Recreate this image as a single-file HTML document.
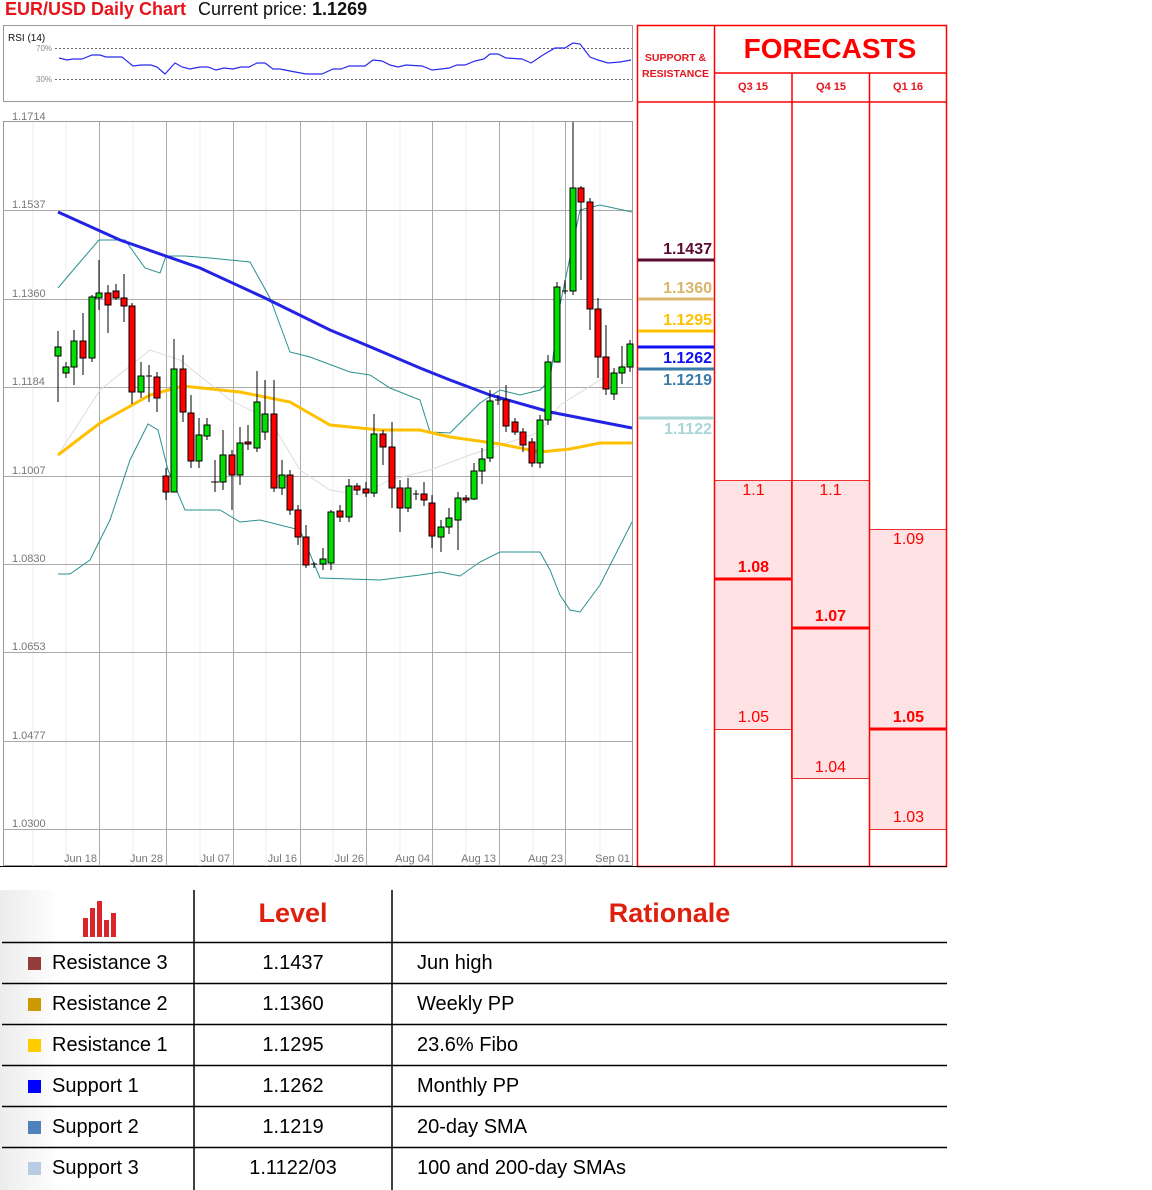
<!DOCTYPE html>
<html><head><meta charset="utf-8"><style>
body{margin:0;width:1152px;height:1190px;background:#fff;position:relative;overflow:hidden;font-family:"Liberation Sans",sans-serif}
.a{position:absolute;white-space:nowrap}
.sr{position:absolute;right:440px;font-size:16px;font-weight:bold;line-height:18px}
.fc{position:absolute;width:77px;text-align:center;color:#f00;font-size:16px;line-height:18px}
.row{position:absolute;left:0;width:947px;height:41px;font-size:20px;line-height:41px}
.row .sq{position:absolute;left:28px;top:14px;width:13px;height:13px}
.row .n{position:absolute;left:52px}
.row .l{position:absolute;left:194px;width:198px;text-align:center}
.row .r{position:absolute;left:417px}
</style></head><body>
<div class="a" style="left:5px;top:-1px;font-size:18px;font-weight:bold;color:#e8141c">EUR/USD Daily Chart</div>
<div class="a" style="left:198px;top:-1px;font-size:18px;color:#111">Current price: <b>1.1269</b></div>

<svg class="a" style="left:0;top:0" width="960" height="880" viewBox="0 0 960 880">
<!-- RSI panel -->
<rect x="3.5" y="25.5" width="629" height="76" fill="#fff" stroke="#999"/>
<text x="8" y="41" font-size="10" fill="#111" font-family="Liberation Sans">RSI (14)</text>
<text x="36" y="51" font-size="8" fill="#888" font-family="Liberation Sans">70%</text>
<text x="36" y="82" font-size="8" fill="#888" font-family="Liberation Sans">30%</text>
<line x1="55" y1="48.5" x2="632" y2="48.5" stroke="#666" stroke-dasharray="2,2"/>
<line x1="55" y1="79.5" x2="632" y2="79.5" stroke="#666" stroke-dasharray="2,2"/>
<polyline fill="none" stroke="#2a2af0" stroke-width="1.2" points="59,58 67,60 73,59 82,59 92,55 100,55 106,57 122,57 133,66 141,65 151,65 157,67 165,74 175,63 182,67 190,69 200,67 208,67 216,70 224,68 233,69 241,67 249,67 257,63 265,63 273,69 280,69 290,71 306,74 322,74 333,69 341,69 349,66 365,66 373,60 382,61 390,65 398,67 406,65 422,66 432,70 441,69 449,68 457,65 465,65 475,61 484,59 490,54 498,54 506,58 522,59 531,63 543,55 555,48 565,48 573,43 580,44 590,57 598,60 608,63 620,62 631,60"/>

<!-- main chart -->
<rect x="3.5" y="121.5" width="629" height="744" fill="#fff" stroke="#999"/>
<g stroke="#eee">
<line x1="33" y1="122" x2="33" y2="866"/><line x1="66" y1="122" x2="66" y2="866"/><line x1="133" y1="122" x2="133" y2="866"/><line x1="200" y1="122" x2="200" y2="866"/><line x1="266" y1="122" x2="266" y2="866"/><line x1="333" y1="122" x2="333" y2="866"/><line x1="400" y1="122" x2="400" y2="866"/><line x1="466" y1="122" x2="466" y2="866"/><line x1="533" y1="122" x2="533" y2="866"/><line x1="600" y1="122" x2="600" y2="866"/>
</g>
<g stroke="#aaa">
<line x1="4" y1="210.5" x2="632" y2="210.5"/><line x1="4" y1="299.5" x2="632" y2="299.5"/><line x1="4" y1="387.5" x2="632" y2="387.5"/><line x1="4" y1="476.5" x2="632" y2="476.5"/><line x1="4" y1="564.5" x2="632" y2="564.5"/><line x1="4" y1="652.5" x2="632" y2="652.5"/><line x1="4" y1="741.5" x2="632" y2="741.5"/><line x1="4" y1="829.5" x2="632" y2="829.5"/>
<line x1="99.5" y1="122" x2="99.5" y2="866"/><line x1="166.5" y1="122" x2="166.5" y2="866"/><line x1="233.5" y1="122" x2="233.5" y2="866"/><line x1="300.5" y1="122" x2="300.5" y2="866"/><line x1="366.5" y1="122" x2="366.5" y2="866"/><line x1="432.5" y1="122" x2="432.5" y2="866"/><line x1="499.5" y1="122" x2="499.5" y2="866"/><line x1="565.5" y1="122" x2="565.5" y2="866"/>
</g>
<g font-size="11" fill="#777" font-family="Liberation Sans">
<text x="12" y="120">1.1714</text><text x="12" y="208">1.1537</text><text x="12" y="297">1.1360</text><text x="12" y="385">1.1184</text><text x="12" y="474">1.1007</text><text x="12" y="562">1.0830</text><text x="12" y="650">1.0653</text><text x="12" y="739">1.0477</text><text x="12" y="827">1.0300</text>
</g>
<g font-size="11" fill="#777" font-family="Liberation Sans" text-anchor="end">
<text x="97" y="862">Jun 18</text><text x="163" y="862">Jun 28</text><text x="230" y="862">Jul 07</text><text x="297" y="862">Jul 16</text><text x="364" y="862">Jul 26</text><text x="430" y="862">Aug 04</text><text x="496" y="862">Aug 13</text><text x="563" y="862">Aug 23</text><text x="630" y="862">Sep 01</text>
</g>
<!-- indicators -->
<polyline fill="none" stroke="#ddd" stroke-width="1" points="58,455 100,390 150,350 180,360 230,400 270,420 300,470 330,490 360,495 390,480 430,470 470,455 510,442 540,432 560,405 600,380 632,360"/>
<polyline fill="none" stroke="#2a9090" stroke-width="1" points="58,288 80,262 99,240 125,240 145,268 160,273 166,256 185,256 210,258 250,262 270,298 290,352 310,357 350,372 370,375 390,388 420,400 430,432 450,433 480,403 500,390 520,395 540,390 550,380 560,305 580,210 600,205 632,212"/>
<polyline fill="none" stroke="#2a9090" stroke-width="1" points="58,574 70,574 90,560 110,520 130,460 148,424 158,430 168,470 185,510 220,510 240,522 260,520 300,530 320,578 380,580 420,575 440,572 460,576 480,562 500,552 540,552 550,570 560,595 570,610 580,612 600,585 632,522"/>
<polyline fill="none" stroke="#ffc000" stroke-width="3" points="58,455 100,423 150,395 183,386 240,392 290,402 330,425 380,430 420,430 450,437 500,444 540,452 570,449 600,443 632,443"/>
<polyline fill="none" stroke="#2323e6" stroke-width="3" points="58,212 120,240 200,268 265,298 330,330 366,345 420,368 450,380 490,395 550,412 632,428"/>
<!-- candles -->
<g stroke="#000" stroke-width="1">
<path d="M58 331V402M66 362V378M74 330V385M83 313V375M92 295V362M99 260V310M108 285V333M116 284V300M124 274V322M132 303V404M141 362V398M149 365V402M157 372V412M166 468V500M174 339V492M183 355V422M191 395V468M199 418V468M207 418V440M215 460V492M223 430V490M232 450V510M240 427V485M248 425V450M257 371V452M265 380V440M274 380V492M282 460V495M290 470V515M298 505V545M306 525V568M314 562V568M323 548V570M331 510V570M340 505V522M349 479V522M357 483V495M366 482V497M374 414V497M383 430V465M392 422V508M400 480V532M408 478V512M416 490V500M424 482V506M432 495V548M441 520V552M449 508V534M458 492V550M466 495V503M474 463V500M482 448V484M490 390V462M498 395V405M506 385V432M515 418V435M523 428V452M532 438V467M540 415V468M548 355V425M557 282V362M565 280V294M573 122V295M581 186V280M590 198V330M598 298V378M606 325V395M614 368V400M622 346V384M630 340V372" fill="none"/>
<g fill="#00e000">
<rect x="55" y="347" width="6" height="9"/><rect x="63" y="367" width="6" height="6"/><rect x="71" y="341" width="6" height="26"/><rect x="89" y="297" width="6" height="61"/><rect x="96" y="293" width="6" height="5"/><rect x="138" y="376" width="6" height="16"/><rect x="171" y="369" width="6" height="123"/><rect x="196" y="435" width="6" height="26"/><rect x="204" y="425" width="6" height="11"/><rect x="220" y="455" width="6" height="27"/><rect x="237" y="443" width="6" height="32"/><rect x="254" y="402" width="6" height="46"/><rect x="262" y="414" width="6" height="18"/><rect x="279" y="475" width="6" height="13"/><rect x="320" y="559" width="6" height="5"/><rect x="328" y="512" width="6" height="51"/><rect x="346" y="486" width="6" height="31"/><rect x="371" y="434" width="6" height="59"/><rect x="405" y="488" width="6" height="20"/><rect x="438" y="527" width="6" height="10"/><rect x="446" y="518" width="6" height="9"/><rect x="455" y="498" width="6" height="22"/><rect x="471" y="471" width="6" height="28"/><rect x="479" y="459" width="6" height="12"/><rect x="487" y="401" width="6" height="57"/><rect x="537" y="420" width="6" height="43"/><rect x="545" y="362" width="6" height="58"/><rect x="554" y="287" width="6" height="75"/><rect x="570" y="188" width="6" height="103"/><rect x="611" y="373" width="6" height="21"/><rect x="619" y="367" width="6" height="6"/><rect x="627" y="344" width="6" height="23"/>
</g>
<g fill="#ff0000">
<rect x="80" y="341" width="6" height="17"/><rect x="105" y="293" width="6" height="12"/><rect x="113" y="291" width="6" height="7"/><rect x="121" y="298" width="6" height="8"/><rect x="129" y="306" width="6" height="86"/><rect x="154" y="377" width="6" height="21"/><rect x="163" y="476" width="6" height="16"/><rect x="180" y="369" width="6" height="43"/><rect x="188" y="413" width="6" height="48"/><rect x="229" y="455" width="6" height="20"/><rect x="245" y="442" width="6" height="2"/><rect x="271" y="414" width="6" height="74"/><rect x="287" y="475" width="6" height="35"/><rect x="295" y="510" width="6" height="27"/><rect x="303" y="537" width="6" height="28"/><rect x="337" y="511" width="6" height="6"/><rect x="354" y="486" width="6" height="4"/><rect x="363" y="489" width="6" height="4"/><rect x="380" y="434" width="6" height="13"/><rect x="389" y="447" width="6" height="41"/><rect x="397" y="488" width="6" height="20"/><rect x="421" y="494" width="6" height="6"/><rect x="429" y="503" width="6" height="33"/><rect x="463" y="498" width="6" height="2"/><rect x="503" y="400" width="6" height="26"/><rect x="512" y="422" width="6" height="10"/><rect x="520" y="432" width="6" height="13"/><rect x="529" y="442" width="6" height="21"/><rect x="578" y="188" width="6" height="14"/><rect x="587" y="202" width="6" height="107"/><rect x="595" y="309" width="6" height="48"/><rect x="603" y="357" width="6" height="32"/>
</g>
<path d="M146 376H152M211 482H219M311 564H317M413 494H419M495 400H501M562 291H568" fill="none"/>
</g>

<!-- right panel -->
<g fill="#ffe2e4" stroke="#f03030" stroke-width="1">
<rect x="714.5" y="480.5" width="77" height="249"/>
<rect x="791.5" y="480.5" width="78" height="298"/>
<rect x="869.5" y="529.5" width="77" height="300"/>
</g>
<g stroke="#f00" stroke-width="3">
<line x1="714" y1="579" x2="791" y2="579"/><line x1="792" y1="628" x2="869" y2="628"/><line x1="870" y1="729" x2="946" y2="729"/>
</g>
<g stroke="#f00" stroke-width="1.5" fill="none">
<rect x="637.5" y="25.5" width="309" height="841"/>
<line x1="637" y1="102" x2="946" y2="102"/><line x1="714" y1="73" x2="946" y2="73"/>
<line x1="714.5" y1="25" x2="714.5" y2="866"/><line x1="792" y1="73" x2="792" y2="866"/><line x1="869.5" y1="73" x2="869.5" y2="866"/>
</g>
<line x1="0" y1="866.5" x2="947" y2="866.5" stroke="#000"/>
<g stroke-width="3">
<line x1="638" y1="260" x2="714" y2="260" stroke="#5a0a30"/>
<line x1="638" y1="299" x2="714" y2="299" stroke="#dab56a"/>
<line x1="638" y1="331" x2="714" y2="331" stroke="#ffc000"/>
<line x1="638" y1="347" x2="714" y2="347" stroke="#1010f0"/>
<line x1="638" y1="369" x2="714" y2="369" stroke="#3a7aa8"/>
<line x1="638" y1="418" x2="714" y2="418" stroke="#a8d6d6"/>
</g>
</svg>

<div class="a" style="left:637px;top:50px;width:77px;text-align:center;color:#e8141c;font-size:10.5px;font-weight:bold;line-height:16px">SUPPORT &amp;<br>RESISTANCE</div>
<div class="a" style="left:714px;top:33px;width:232px;text-align:center;color:#f00;font-size:28px;font-weight:bold">FORECASTS</div>
<div class="a" style="left:714px;top:81px;width:78px;text-align:center;color:#e8141c;font-size:11px;font-weight:bold">Q3 15</div>
<div class="a" style="left:792px;top:81px;width:78px;text-align:center;color:#e8141c;font-size:11px;font-weight:bold">Q4 15</div>
<div class="a" style="left:869px;top:81px;width:78px;text-align:center;color:#e8141c;font-size:11px;font-weight:bold">Q1 16</div>

<div class="sr" style="top:241px;color:#5a0a30">1.1437</div>
<div class="sr" style="top:280px;color:#dab56a">1.1360</div>
<div class="sr" style="top:312px;color:#ffc000">1.1295</div>
<div class="sr" style="top:350px;color:#1010f0">1.1262</div>
<div class="sr" style="top:372px;color:#3a7aa8">1.1219</div>
<div class="sr" style="top:421px;color:#a8d6d6">1.1122</div>

<div class="fc" style="left:715px;top:482px">1.1</div>
<div class="fc" style="left:715px;top:559px;font-weight:bold">1.08</div>
<div class="fc" style="left:715px;top:709px">1.05</div>
<div class="fc" style="left:792px;top:482px">1.1</div>
<div class="fc" style="left:792px;top:608px;font-weight:bold">1.07</div>
<div class="fc" style="left:792px;top:759px">1.04</div>
<div class="fc" style="left:870px;top:531px">1.09</div>
<div class="fc" style="left:870px;top:709px;font-weight:bold">1.05</div>
<div class="fc" style="left:870px;top:809px">1.03</div>

<!-- table -->
<div class="a" style="left:0;top:890px;width:60px;height:300px;background:linear-gradient(90deg,#ececec,#fff)"></div>
<svg class="a" style="left:0;top:870px" width="960" height="320">
<g fill="#d8262a"><rect x="83" y="48" width="5" height="19"/><rect x="90" y="38" width="5" height="29"/><rect x="97" y="31" width="5" height="36"/><rect x="104" y="50" width="5" height="17"/><rect x="111" y="43" width="5" height="24"/></g>
<g stroke="#000" stroke-width="1.5">
<line x1="194" y1="20" x2="194" y2="320"/><line x1="392" y1="20" x2="392" y2="320"/>
<line x1="2" y1="72.5" x2="947" y2="72.5"/><line x1="2" y1="113.5" x2="947" y2="113.5"/><line x1="2" y1="154.5" x2="947" y2="154.5"/><line x1="2" y1="195.5" x2="947" y2="195.5"/><line x1="2" y1="236.5" x2="947" y2="236.5"/><line x1="2" y1="277.5" x2="947" y2="277.5"/>
</g>
</svg>
<div class="a" style="left:194px;top:898px;width:198px;text-align:center;color:#e0200e;font-size:27px;font-weight:bold">Level</div>
<div class="a" style="left:392px;top:898px;width:555px;text-align:center;color:#e0200e;font-size:27px;font-weight:bold">Rationale</div>

<div class="row" style="top:943px"><span class="sq" style="background:#943b3b"></span><span class="n">Resistance 3</span><span class="l">1.1437</span><span class="r">Jun high</span></div>
<div class="row" style="top:984px"><span class="sq" style="background:#cc9900"></span><span class="n">Resistance 2</span><span class="l">1.1360</span><span class="r">Weekly PP</span></div>
<div class="row" style="top:1025px"><span class="sq" style="background:#ffcc00"></span><span class="n">Resistance 1</span><span class="l">1.1295</span><span class="r">23.6% Fibo</span></div>
<div class="row" style="top:1066px"><span class="sq" style="background:#0000ff"></span><span class="n">Support 1</span><span class="l">1.1262</span><span class="r">Monthly PP</span></div>
<div class="row" style="top:1107px"><span class="sq" style="background:#4f81bd"></span><span class="n">Support 2</span><span class="l">1.1219</span><span class="r">20-day SMA</span></div>
<div class="row" style="top:1148px"><span class="sq" style="background:#b8cce4"></span><span class="n">Support 3</span><span class="l">1.1122/03</span><span class="r">100 and 200-day SMAs</span></div>
</body></html>
